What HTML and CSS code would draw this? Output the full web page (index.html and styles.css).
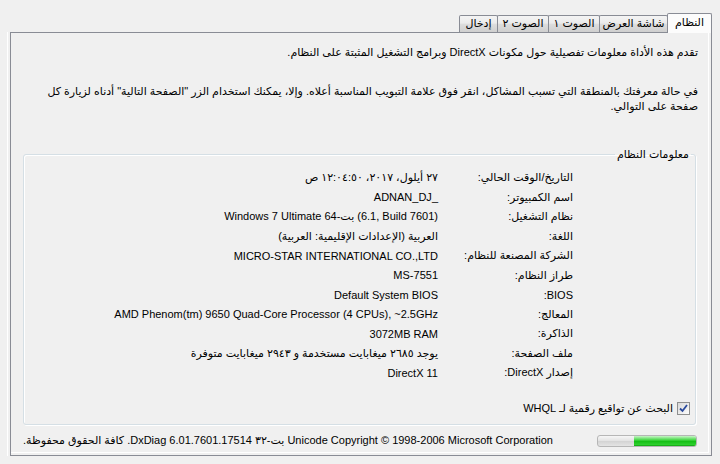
FILE: index.html
```html
<!DOCTYPE html>
<html lang="ar" dir="rtl">
<head>
<meta charset="UTF-8">
<title>أداة تشخيص DirectX</title>
<link rel="stylesheet" href="styles.css">
</head>
<body>

<div class="window">
    <div class="tabs">
        <div class="tab active">النظام</div>
        <div class="tab tab-display">شاشة العرض</div>
        <div class="tab">الصوت ١</div>
        <div class="tab">الصوت ٢</div>
        <div class="tab tab-input">إدخال</div>
    </div>

    <div class="panel">
        <p class="intro">تقدم هذه الأداة معلومات تفصيلية حول مكونات DirectX وبرامج التشغيل المثبتة على النظام.</p>
        <p class="intro help">في حالة معرفتك بالمنطقة التي تسبب المشاكل، انقر فوق علامة التبويب المناسبة أعلاه. وإلا، يمكنك استخدام الزر "الصفحة التالية" أدناه لزيارة كل<br>صفحة على التوالي.</p>

        <fieldset class="sysinfo">
            <legend>معلومات النظام</legend>
            <div class="info-grid">
                <div class="label">التاريخ/الوقت الحالي:</div>
                <div class="value">٢٧ أيلول، ٢٠١٧، ١٢:٠٤:٥٠ ص</div>
                <div class="label">اسم الكمبيوتر:</div>
                <div class="value">_ADNAN_DJ</div>
                <div class="label">نظام التشغيل:</div>
                <div class="value"><span class="ltr">Windows 7 Ultimate 64-بت (6.1, Build 7601)</span></div>
                <div class="label">اللغة:</div>
                <div class="value">العربية (الإعدادات الإقليمية: العربية)</div>
                <div class="label">الشركة المصنعة للنظام:</div>
                <div class="value">MICRO-STAR INTERNATIONAL CO.,LTD</div>
                <div class="label">طراز النظام:</div>
                <div class="value">MS-7551</div>
                <div class="label">BIOS:</div>
                <div class="value">Default System BIOS</div>
                <div class="label">المعالج:</div>
                <div class="value">AMD Phenom(tm) 9650 Quad-Core Processor (4 CPUs), ~2.5GHz</div>
                <div class="label">الذاكرة:</div>
                <div class="value">3072MB RAM</div>
                <div class="label">ملف الصفحة:</div>
                <div class="value">يوجد ٢٦٨٥ ميغابايت مستخدمة و ٢٩٤٣ ميغابايت متوفرة</div>
                <div class="label">إصدار DirectX:</div>
                <div class="value">DirectX 11</div>
            </div>

            <label class="whql">
                <span class="checkbox">
                    <svg width="11" height="11" viewBox="0 0 11 11"><path d="M2 5.5 L4.5 8 L9 2" fill="none" stroke="#2a4a9c" stroke-width="1.8"/></svg>
                </span>
                البحث عن تواقيع رقمية لـ WHQL
            </label>
        </fieldset>

        <div class="footer">
            <div class="progress"><div class="progress-fill"></div></div>
            <div class="copyright">Unicode  Copyright © 1998-2006 Microsoft Corporation بت-٣٢ DxDiag 6.01.7601.17514. كافة الحقوق محفوظة.</div>
        </div>
    </div>
</div>

</body>
</html>
```

FILE: styles.css
```css
* {
    box-sizing: border-box;
}
body {
    margin: 0;
    background: #f0f0f0;
    font-family: "Liberation Sans", "DejaVu Sans", sans-serif;
    font-size: 11px;
    color: #000;
}
.window {
    width: 720px;
    height: 464px;
    padding: 13px 8px 0 10px;
    overflow: hidden;
}

/* tab strip */
.tabs {
    display: flex;
    align-items: flex-end;
    height: 19px;
}
.tab {
    width: 52px;
    height: 17px;
    margin-right: -1px;
    border: 1px solid #898c95;
    border-bottom: 0;
    border-radius: 2px 2px 0 0;
    background: linear-gradient(#f4f4f4, #ebebeb 45%, #dddddd 50%, #cfcfcf);
    text-align: center;
    line-height: 15px;
    white-space: nowrap;
}
.tab.active {
    width: 45px;
    height: 20px;
    margin-right: 0;
    margin-bottom: -1px;
    background: #fcfcfc;
    line-height: 17px;
    position: relative;
    z-index: 1;
}
.tab-display {
    width: 69px;
}
.tab-input {
    width: 39px;
}

/* page body */
.panel {
    height: 424px;
    border: 1px solid #898c95;
    padding: 12px 13px 0 11px;
    box-shadow: inset -2px -2px 0 #f0f0f0, inset -3px -3px 0 #fff, -2px 0 0 #f0f0f0, -3px 0 0 #fff;
}
.intro {
    margin: 0;
    line-height: 15px;
}
.help {
    margin-top: 24px;
}

.sysinfo {
    margin: 33px 2px 0 1px;
    padding: 6px 0 8px;
    border: 1px solid #d5dfe5;
    border-radius: 3px;
    box-shadow: inset 1px 1px 0 #fff, 1px 1px 0 #fff;
    min-width: 0;
}
.sysinfo legend {
    margin-right: 4px;
    padding: 0 2px;
    line-height: 15px;
}
.info-grid {
    display: grid;
    grid-template-columns: 135px auto;
    grid-auto-rows: 19.5px;
    align-items: center;
    padding-right: 122px;
    white-space: nowrap;
}
.ltr {
    direction: ltr;
    unicode-bidi: isolate;
}

.whql {
    display: flex;
    align-items: center;
    gap: 4px;
    height: 15px;
    margin-top: 18px;
    padding-right: 5px;
}
.checkbox {
    width: 13px;
    height: 13px;
    border: 1px solid #8e8f8f;
    background: linear-gradient(135deg, #d8d8d8, #fdfdfd);
    display: flex;
    align-items: center;
    justify-content: center;
}
.checkbox svg {
    display: block;
}

.footer {
    display: flex;
    justify-content: space-between;
    align-items: center;
    height: 16px;
    margin: 8px 1px 0 1px;
}
.progress {
    width: 100px;
    height: 12px;
    border: 1px solid #b6b6b6;
    border-radius: 3px;
    background: linear-gradient(#f6f6f6, #e2e2e2 50%, #d2d2d2 50%, #e4e4e4);
    display: flex;
    overflow: hidden;
}
.progress-fill {
    width: 62px;
    height: 100%;
    background: linear-gradient(#c8f5c8, #45d845 40%, #16c016 55%, #2ccf2c 85%, #0e9f0e);
}
.copyright {
    white-space: nowrap;
    line-height: 15px;
}
```
